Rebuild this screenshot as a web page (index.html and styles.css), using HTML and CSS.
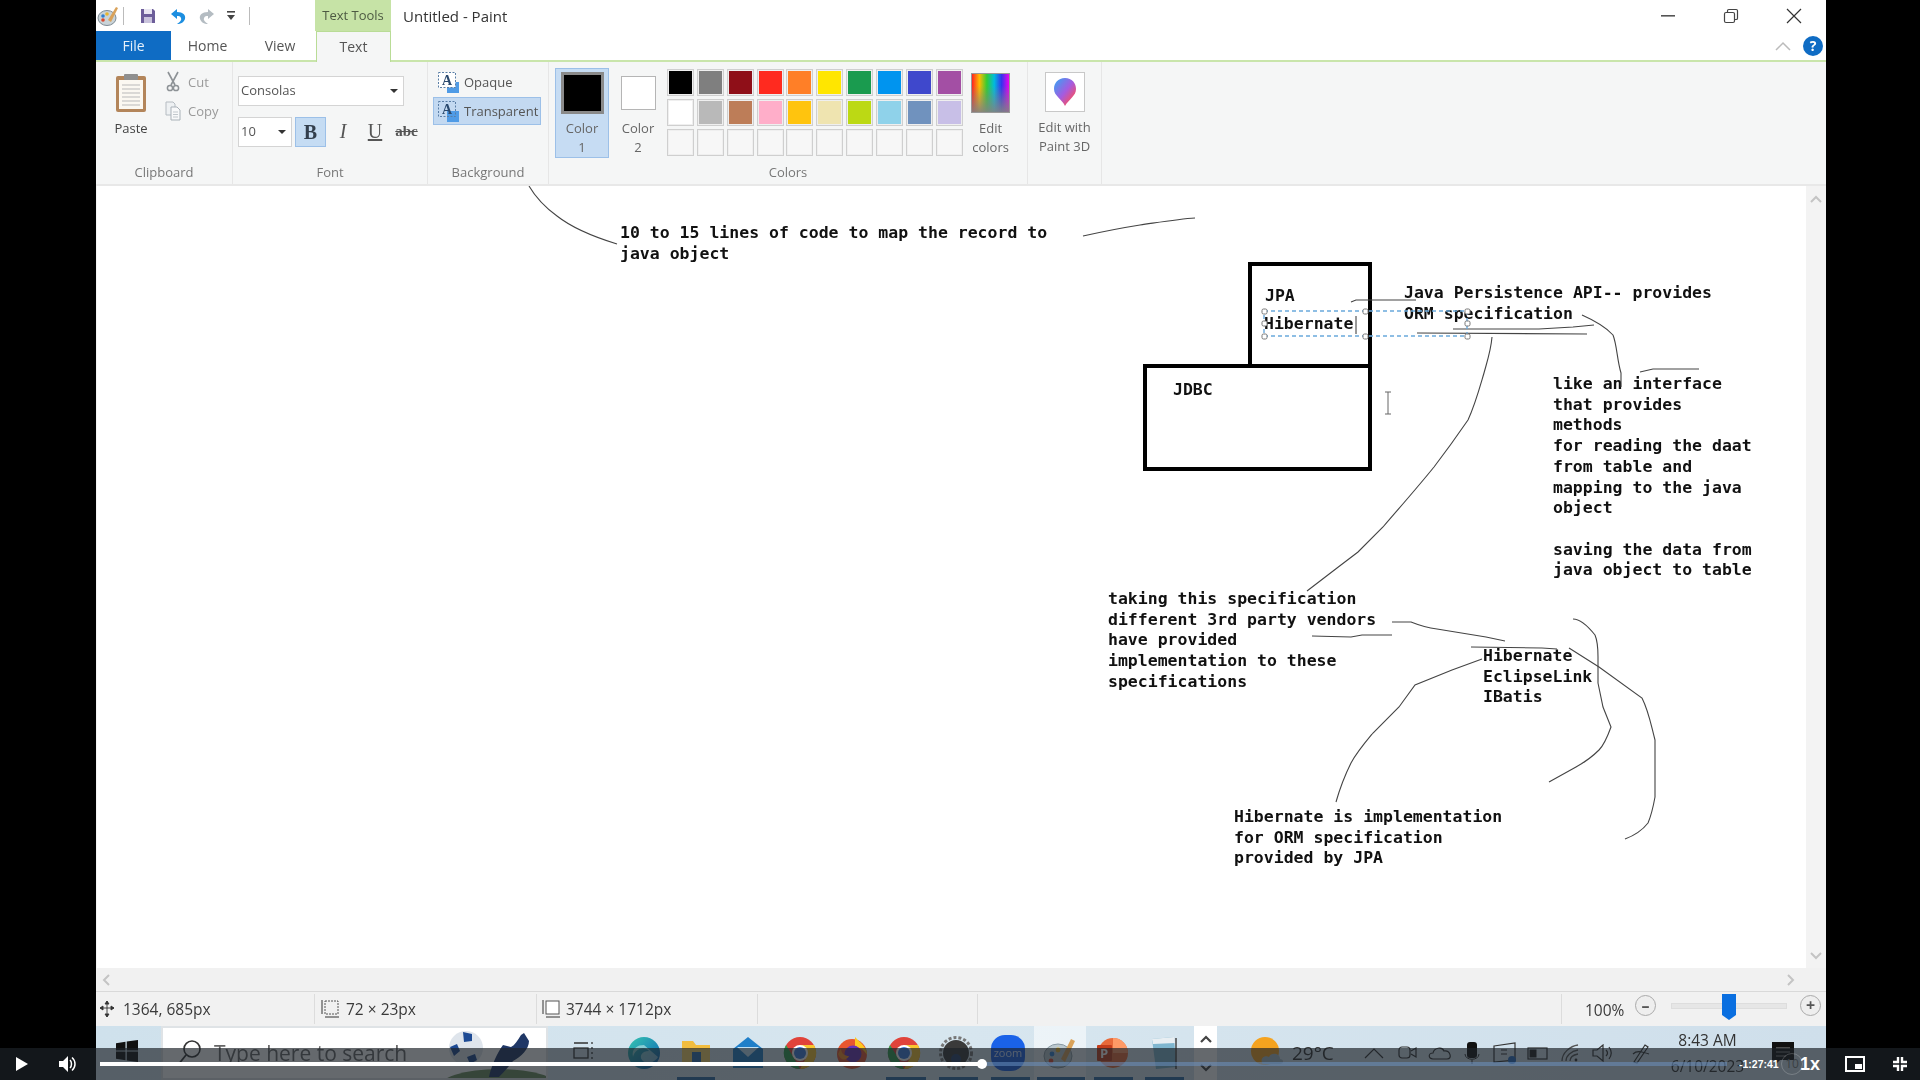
FILE: index.html
```html
<!DOCTYPE html>
<html lang="en">
<head>
  <meta charset="UTF-8" />
  <title>Untitled - Paint</title>
  <link rel="stylesheet" href="styles.css">
</head>
<body>
  <div class="app">

    <div class="titlebar">
      <svg class="qa-paint" width="22" height="22" viewBox="0 0 22 22"><ellipse cx="10" cy="13" rx="9" ry="7.5" fill="#c9d3d8" stroke="#7d8a94"/><circle cx="6" cy="11" r="1.8" fill="#2f7fd1"/><circle cx="10" cy="9" r="1.8" fill="#e8b52c"/><circle cx="6" cy="15" r="1.8" fill="#d9482f"/><path d="M11 15 L19 2 L21 3 L14 17 Z" fill="#d9a25a"/></svg>
      <span class="qa-sep"></span>
      <svg class="qa-save" width="16" height="16" viewBox="0 0 16 16"><path d="M1 1h12l2 2v12H1z" fill="#6d5e9a"/><rect x="4" y="1" width="8" height="5" fill="#e9e6f2"/><rect x="4" y="9" width="8" height="6" fill="#c9c3dc"/></svg>
      <svg class="qa-undo" width="20" height="20" viewBox="0 0 20 20"><path d="M3 8 L9 3 V6 C15 6 18 9 17 13 C16 16 13 18 9 18 C12 16 14 14 13 12 C12 10 11 10 9 10 V13 Z" fill="#1c8ee0"/></svg>
      <svg class="qa-redo" width="20" height="20" viewBox="0 0 20 20"><path d="M17 8 L11 3 V6 C5 6 2 9 3 13 C4 16 7 18 11 18 C8 16 6 14 7 12 C8 10 9 10 11 10 V13 Z" fill="#b4bcc2"/></svg>
      <svg class="qa-more" width="10" height="12" viewBox="0 0 10 12"><rect x="1" y="1" width="8" height="1.6" fill="#444"/><path d="M1 5h8l-4 5z" fill="#444"/></svg>
      <span class="qa-sep qa-sep-2"></span>
      <div class="context-tab">Text Tools</div>
      <div class="window-title">Untitled - Paint</div>
      <div class="window-buttons">
        <svg width="16" height="16" viewBox="0 0 16 16"><rect x="1" y="7" width="14" height="1.6" fill="#555"/></svg>
        <svg width="16" height="16" viewBox="0 0 16 16"><rect x="1.5" y="4.5" width="10" height="10" rx="1.5" fill="#fff" stroke="#444" stroke-width="1.2"/><path d="M4.5 4.5V2.8c0-.8.5-1.3 1.3-1.3h7.4c.8 0 1.3.5 1.3 1.3v7.4c0 .8-.5 1.3-1.3 1.3h-1.7" fill="none" stroke="#444" stroke-width="1.2"/></svg>
        <svg width="16" height="16" viewBox="0 0 16 16"><path d="M1 1 L15 15 M15 1 L1 15" stroke="#333" stroke-width="1.2"/></svg>
      </div>
    </div>

    <div class="tabs">
      <div class="tab tab-file">File</div>
      <div class="tab tab-home">Home</div>
      <div class="tab tab-view">View</div>
      <div class="tab tab-text">Text</div>
      <svg class="collapse" width="16" height="10" viewBox="0 0 16 10"><path d="M1 9 L8 2 L15 9" fill="none" stroke="#bbb" stroke-width="1.5"/></svg>
      <div class="help">?</div>
    </div>

    <div class="ribbon">
      <section class="group group-clipboard">
        <div class="group-body">
          <div class="paste">
            <svg width="32" height="40" viewBox="0 0 32 40"><rect x="1" y="3" width="30" height="36" rx="2" fill="#b3855a"/><rect x="4" y="7" width="24" height="29" fill="#fbf8f1"/><path d="M7 12h18M7 16h18M7 20h18M7 24h18M7 28h18M7 32h18" stroke="#b9b9b9"/><rect x="9" y="1" width="14" height="6" rx="1" fill="#8f8f8f"/></svg>
            <span>Paste</span>
          </div>
          <div class="clip-actions">
            <div class="clip-row">
              <svg width="14" height="21" viewBox="0 0 14 21"><path d="M2 1 L9 14 M12 1 L5 14" stroke="#8d9296" stroke-width="1.6"/><circle cx="4" cy="17" r="2.6" fill="none" stroke="#8d9296" stroke-width="1.5"/><circle cx="10" cy="17" r="2.6" fill="none" stroke="#8d9296" stroke-width="1.5"/></svg>
              <span>Cut</span>
            </div>
            <div class="clip-row">
              <svg width="16" height="20" viewBox="0 0 16 20"><path d="M1 1h7l2 2v11H1z" fill="#eef1f3" stroke="#b5bcc2"/><path d="M6 6h6l3 3v10H6z" fill="#f8f9fa" stroke="#a9b1b8"/><path d="M8 11h5M8 13.5h5M8 16h5" stroke="#c1c7cc"/></svg>
              <span>Copy</span>
            </div>
          </div>
        </div>
        <div class="group-label">Clipboard</div>
      </section>

      <section class="group group-font">
        <div class="group-body font-body">
          <div class="font-select">Consolas<i class="caret"></i></div>
          <div class="font-row">
            <div class="size-select">10<i class="caret"></i></div>
            <div class="fmt fmt-on fmt-b">B</div>
            <div class="fmt fmt-i">I</div>
            <div class="fmt fmt-u">U</div>
            <div class="fmt fmt-s">abc</div>
          </div>
        </div>
        <div class="group-label">Font</div>
      </section>

      <section class="group group-background">
        <div class="group-body bg-body">
          <div class="bg-option">
            <svg width="24" height="23" viewBox="0 0 24 23"><rect x="10" y="11" width="12" height="11" fill="#4f9be6"/><rect x="1.5" y="1.5" width="17" height="15" fill="#fff" stroke="#5a7ea6" stroke-dasharray="2 1.5"/><text x="5" y="14" class="bg-a">A</text></svg>
            <span>Opaque</span>
          </div>
          <div class="bg-option bg-option-on">
            <svg width="24" height="23" viewBox="0 0 24 23"><rect x="10" y="11" width="12" height="11" fill="#4f9be6"/><rect x="1.5" y="1.5" width="17" height="15" fill="none" stroke="#5a7ea6" stroke-dasharray="2 1.5"/><text x="5" y="14" class="bg-a">A</text></svg>
            <span>Transparent</span>
          </div>
        </div>
        <div class="group-label">Background</div>
      </section>

      <section class="group group-colors">
        <div class="group-body colors-body">
          <div class="color-btn color-btn-on">
            <div class="color-1-swatch"></div>
            <span>Color<br>1</span>
          </div>
          <div class="color-btn color-btn-2">
            <div class="color-2-swatch"></div>
            <span>Color<br>2</span>
          </div>
          <div class="palette">
            <i class="c-black"></i><i class="c-grey"></i><i class="c-maroon"></i><i class="c-red"></i><i class="c-orange"></i><i class="c-yellow"></i><i class="c-green"></i><i class="c-azure"></i><i class="c-indigo"></i><i class="c-purple"></i>
            <i class="c-white"></i><i class="c-silver"></i><i class="c-brown"></i><i class="c-pink"></i><i class="c-gold"></i><i class="c-cream"></i><i class="c-lime"></i><i class="c-sky"></i><i class="c-steel"></i><i class="c-lavender"></i>
            <i></i><i></i><i></i><i></i><i></i><i></i><i></i><i></i><i></i><i></i>
          </div>
          <div class="edit-colors">
            <div class="spectrum"></div>
            <span>Edit<br>colors</span>
          </div>
        </div>
        <div class="group-label">Colors</div>
      </section>

      <section class="group group-3d">
        <div class="paint3d">
          <div class="paint3d-icon">
            <svg width="24" height="30" viewBox="0 0 24 30"><defs><linearGradient id="drop" x1="0" y1="0" x2="1" y2="1"><stop offset="0" stop-color="#2fa8f5"/><stop offset=".5" stop-color="#a55be0"/><stop offset=".8" stop-color="#f0506e"/><stop offset="1" stop-color="#ffb02e"/></linearGradient></defs><path d="M12 1 C19 1 23 6 23 12 C23 19 16 22 12 29 C9 22 1 19 1 12 C1 6 5 1 12 1 Z" fill="url(#drop)"/></svg>
          </div>
          <span>Edit with<br>Paint 3D</span>
        </div>
      </section>
    </div>

    <div class="work-area">
      <div class="canvas">
        <p class="note note-code">10 to 15 lines of code to map the record to
java object</p>
        <div class="box box-jpa"></div>
        <div class="box box-jdbc"></div>
        <p class="note note-jpa">JPA</p>
        <p class="note note-hibernate">Hibernate</p>
        <p class="note note-jdbc">JDBC</p>
        <p class="note note-api">Java Persistence API-- provides
ORM specification</p>
        <p class="note note-interface">like an interface
that provides
methods
for reading the daat
from table and
mapping to the java
object

saving the data from
java object to table</p>
        <p class="note note-vendors">taking this specification
different 3rd party vendors
have provided
implementation to these
specifications</p>
        <p class="note note-list">Hibernate
EclipseLink
IBatis</p>
        <p class="note note-impl">Hibernate is implementation
for ORM specification
provided by JPA</p>

        <!-- freehand strokes, coordinates are screen pixels -->
        <svg class="strokes" width="1709" height="782" viewBox="96 186 1709 782">
          <g class="ink">
            <path d="M528 186 C535 198 545 208 556 216 C570 227 590 236 616 244"/>
            <path d="M1082 236 C1100 232 1120 228 1139 225 C1160 222 1178 219 1194 218"/>
            <path d="M1350 302 L1355 300 L1415 300"/>
            <path d="M1452 329 L1538 329 L1572 327 L1593 325"/>
            <path d="M1416 333 L1586 334"/>
            <path d="M1581 315 C1590 319 1604 326 1612 335 C1616 345 1616 360 1620 373 L1620 387"/>
            <path d="M1639 372 L1652 369 L1698 369"/>
            <path d="M1491 337 C1490 350 1486 362 1483 373 C1478 390 1474 405 1467 420 C1456 436 1446 450 1433 467 C1416 488 1400 506 1382 527 L1357 552 L1336 568 L1306 591"/>
            <path d="M1391 622 L1410 622 C1420 626 1428 628 1436 629 L1485 637 L1504 641"/>
            <path d="M1311 636 L1350 637 L1361 635 L1391 635"/>
            <path d="M1470 647 L1541 648 L1556 649"/>
            <path d="M1572 619 C1578 619 1586 625 1594 635 C1597 642 1597 650 1597 657 L1597 683 L1602 707 L1610 727 C1606 738 1603 745 1598 750 C1590 758 1584 762 1575 767 L1548 782"/>
            <path d="M1568 648 L1598 667 L1641 698 C1648 712 1650 725 1654 740 L1654 797 C1652 808 1650 816 1647 823 C1640 832 1632 836 1624 839"/>
            <path d="M1481 659 L1451 670 L1414 685 L1398 707 L1372 733 C1362 745 1356 752 1350 763 C1344 775 1339 788 1335 802"/>
          </g>
          <rect class="select-box" x="1263" y="311" width="203" height="25"/>
          <g class="handles">
            <rect x="1261" y="309" width="5" height="5" rx="1.5"/><rect x="1362" y="309" width="5" height="5" rx="1.5"/><rect x="1464" y="309" width="5" height="5" rx="1.5"/>
            <rect x="1261" y="321" width="5" height="5" rx="1.5"/><rect x="1464" y="321" width="5" height="5" rx="1.5"/>
            <rect x="1261" y="334" width="5" height="5" rx="1.5"/><rect x="1362" y="334" width="5" height="5" rx="1.5"/><rect x="1464" y="334" width="5" height="5" rx="1.5"/>
          </g>
          <path class="text-caret" d="M1355 316 V334"/>
          <path class="ibeam" d="M1384 392 H1390 M1387 392 V414 M1384 414 H1390"/>
        </svg>
      </div>
      <div class="vscroll">
        <svg width="12" height="8" viewBox="0 0 12 8"><path d="M1 7 L6 2 L11 7" fill="none" stroke="#c4c4c4" stroke-width="2"/></svg>
        <svg width="12" height="8" viewBox="0 0 12 8"><path d="M1 1 L6 6 L11 1" fill="none" stroke="#c4c4c4" stroke-width="2"/></svg>
      </div>
    </div>

    <div class="hscroll">
      <svg width="8" height="12" viewBox="0 0 8 12"><path d="M7 1 L2 6 L7 11" fill="none" stroke="#c4c4c4" stroke-width="2"/></svg>
      <svg width="8" height="12" viewBox="0 0 8 12"><path d="M1 1 L6 6 L1 11" fill="none" stroke="#c4c4c4" stroke-width="2"/></svg>
    </div>

    <div class="statusbar">
      <div class="status-cell status-pos">
        <svg width="16" height="18" viewBox="0 0 16 18"><path d="M8 1V17M1 8H15M8 1L6 4H10ZM8 17L6 14H10ZM1 8L4 6V10ZM15 8L12 6V10Z" stroke="#333" fill="#333" stroke-width=".9"/></svg>
        <span>1364, 685px</span>
      </div>
      <div class="status-cell status-sel">
        <svg width="20" height="20" viewBox="0 0 20 20"><rect x="5" y="2" width="13" height="13" fill="none" stroke="#555" stroke-dasharray="2 1"/><path d="M2 1V15M5 18H19" stroke="#333"/></svg>
        <span>72 × 23px</span>
      </div>
      <div class="status-cell status-size">
        <svg width="20" height="20" viewBox="0 0 20 20"><rect x="5" y="2" width="13" height="13" fill="#fff" stroke="#555"/><path d="M2 1V15M5 18H19" stroke="#333"/></svg>
        <span>3744 × 1712px</span>
      </div>
      <div class="status-cell status-gap"></div>
      <div class="status-cell status-empty"></div>
      <div class="zoom-box">
        <span class="zoom-value">100%</span>
        <div class="zoom-btn">–</div>
        <div class="zoom-track"><svg class="zoom-thumb" width="14" height="26" viewBox="0 0 14 26"><path d="M0 0H14V21L7 26L0 21Z" fill="#0a6fe0"/></svg></div>
        <div class="zoom-btn">+</div>
      </div>
    </div>

    <div class="taskbar">
      <div class="start">
        <svg width="22" height="22" viewBox="0 0 22 22"><path d="M0 3.2 L9.5 1.8V10.4H0ZM10.7 1.6L22 0V10.4H10.7ZM0 11.6H9.5V20.2L0 18.8ZM10.7 11.6H22V22L10.7 20.4Z" fill="#111"/></svg>
      </div>
      <div class="search">
        <svg width="26" height="28" viewBox="0 0 26 28"><circle cx="16" cy="10" r="8" fill="none" stroke="#333" stroke-width="1.6"/><path d="M10 16 L2 26" stroke="#333" stroke-width="1.8"/></svg>
        <span>Type here to search</span>
        <svg class="search-art" width="109" height="52" viewBox="0 0 109 52">
          <ellipse cx="60" cy="62" rx="62" ry="20" fill="#6f8f5e"/>
          <circle cx="27" cy="21" r="17" fill="#dfe5ec"/>
          <path d="M24 5 L33 7 L33 14 L25 15 Z M11 20 L18 17 L21 24 L15 29 Z M28 30 L36 27 L38 33 L31 37 Z" fill="#1d4a94"/>
          <path d="M50 50 C52 40 58 26 64 18 L72 20 C76 18 78 14 82 8 L85 6 L90 14 C90 22 82 30 74 34 C68 42 64 46 60 50 Z" fill="#1f3766"/>
        </svg>
      </div>
      <div class="task-slot task-view">
        <svg width="22" height="26" viewBox="0 0 22 26"><rect x="2" y="8" width="14" height="10" fill="none" stroke="#333" stroke-width="1.3"/><path d="M2 3H16M2 23H16M20 2V4M20 7V9M20 12V14M20 17V19" stroke="#333" stroke-width="1.3"/></svg>
      </div>
      <div class="task-slot">
        <svg width="34" height="34" viewBox="0 0 34 34"><defs><linearGradient id="edge" x1="0" y1="0" x2="1" y2="1"><stop offset="0" stop-color="#36c6b0"/><stop offset="1" stop-color="#0c5fb8"/></linearGradient></defs><circle cx="17" cy="17" r="16" fill="url(#edge)"/><path d="M31 21 C27 28 18 28 15 24 C12 20 15 15 22 15 C18 10 8 12 6 21 C4 12 11 9 17 9" fill="#d9f2ee" opacity=".55"/></svg>
      </div>
      <div class="task-slot">
        <svg width="30" height="30" viewBox="0 0 30 30"><path d="M1 3H12L15 7H29V27H1Z" fill="#f2bd3f"/><rect x="1" y="11" width="28" height="16" fill="#f8d468"/><rect x="11" y="14" width="9" height="13" fill="#2d6fb0"/></svg>
      </div>
      <div class="task-slot">
        <svg width="32" height="34" viewBox="0 0 32 34"><path d="M16 1 L31 13 V32 H1 V13 Z" fill="#1f7fc9"/><path d="M5 11 H27 L16 21 Z" fill="#bfe0f5"/></svg>
      </div>
      <div class="task-slot"><svg width="34" height="34" viewBox="0 0 34 34"><use href="#chrome-mark"/></svg></div>
      <div class="task-slot">
        <svg width="34" height="34" viewBox="0 0 34 34"><circle cx="17" cy="18" r="15" fill="#e8562f"/><path d="M20 1 C24 6 32 10 32 19 C28 12 24 12 20 10 Z" fill="#ffc81f"/><circle cx="18" cy="18" r="8.5" fill="#6a34b8"/><path d="M3 18 C6 26 12 24 14 20 C10 20 6 18 6 12 Z" fill="#f88b25"/></svg>
      </div>
      <div class="task-slot">
        <svg width="34" height="34" viewBox="0 0 34 34"><g id="chrome-mark"><circle cx="17" cy="17" r="16" fill="#e0433a"/><path d="M17 33 A16 16 0 0 1 3 9 L11 22 Z" fill="#2f9e4f"/><path d="M17 33 A16 16 0 0 0 31 9 H17 L23 22 Z" fill="#f7c52d"/><circle cx="17" cy="17" r="8" fill="#fff"/><circle cx="17" cy="17" r="6" fill="#3b7ee0"/></g></svg>
      </div>
      <div class="task-slot">
        <svg width="34" height="36" viewBox="0 0 34 36"><circle cx="17" cy="18" r="13" fill="#3a3a3a"/><circle cx="17" cy="18" r="15.5" fill="none" stroke="#777" stroke-width="3" stroke-dasharray="3 2"/><circle cx="17" cy="24" r="5" fill="#27406b"/></svg>
      </div>
      <div class="task-slot">
        <div class="zoom-app">zoom</div>
      </div>
      <div class="task-slot task-active">
        <svg width="34" height="36" viewBox="0 0 34 36"><ellipse cx="15" cy="21" rx="14" ry="12" fill="#bcc9cf" stroke="#8899a3"/><circle cx="9" cy="19" r="2.4" fill="#2f7fd1"/><circle cx="15" cy="15" r="2.4" fill="#e8b52c"/><circle cx="8" cy="26" r="2.4" fill="#d9482f"/><path d="M18 24 L28 4 L32 6 L22 27 Z" fill="#d9a25a"/></svg>
      </div>
      <div class="task-slot">
        <svg width="32" height="34" viewBox="0 0 32 34"><circle cx="17" cy="17" r="15" fill="#e86a3a"/><path d="M17 2 A15 15 0 0 1 32 17 H17 Z" fill="#ff9a66"/><rect x="1" y="9" width="15" height="16" rx="1" fill="#c43e1c"/><text x="4" y="22" class="ppt-p">P</text></svg>
      </div>
      <div class="task-slot">
        <svg width="30" height="36" viewBox="0 0 30 36"><path d="M3 4 L25 2 L27 32 L7 34 Z" fill="#7fb6cf"/><path d="M3 4 L25 2 L26 8 L4 9 Z" fill="#e8eef2"/><path d="M27 3 V34" stroke="#444" stroke-width="1.5"/></svg>
      </div>
      <div class="task-arrows">
        <svg width="12" height="8" viewBox="0 0 12 8"><path d="M1 7 L6 2 L11 7" fill="none" stroke="#444" stroke-width="2.2"/></svg>
        <svg width="12" height="8" viewBox="0 0 12 8"><path d="M1 1 L6 6 L11 1" fill="none" stroke="#444" stroke-width="2.2"/></svg>
      </div>
      <svg class="weather" width="36" height="36" viewBox="0 0 36 36"><circle cx="15" cy="16" r="14" fill="#f5a31f"/><path d="M12 28 C10 22 16 20 19 22 C21 17 30 18 30 24 C34 24 34 29 30 29 H14 C12 29 12 28 12 28 Z" fill="#a9bdcb"/></svg>
      <div class="temp">29°C</div>
      <div class="tray">
        <div class="tray-slot"><svg width="22" height="12" viewBox="0 0 22 12"><path d="M2 11 L11 2 L20 11" fill="none" stroke="#333" stroke-width="1.2"/></svg></div>
        <div class="tray-slot"><svg width="20" height="20" viewBox="0 0 20 20"><rect x="2" y="4" width="11" height="11" rx="3" fill="none" stroke="#333" stroke-width="1.2"/><path d="M14 8 L19 5 V14 L14 11" fill="none" stroke="#333" stroke-width="1.2"/></svg></div>
        <div class="tray-slot"><svg width="24" height="14" viewBox="0 0 24 14"><path d="M5 13 C0 13 0 7 5 7 C6 2 14 0 16 5 C22 4 25 13 19 13 Z" fill="none" stroke="#333" stroke-width="1.2"/></svg></div>
        <div class="tray-slot"><svg width="16" height="24" viewBox="0 0 16 24"><rect x="3" y="1" width="10" height="16" rx="3" fill="#111"/><path d="M1 13 C1 20 15 20 15 13 M8 19V23" fill="none" stroke="#333"/></svg></div>
        <div class="tray-slot"><svg width="24" height="22" viewBox="0 0 24 22"><path d="M1 4 L22 1 V18 L1 20 Z" fill="none" stroke="#333" stroke-width="1.2"/><path d="M8 8H14M8 12H14" stroke="#333"/><circle cx="19" cy="18" r="4" fill="#2a6fc4"/></svg></div>
        <div class="tray-slot"><svg width="22" height="14" viewBox="0 0 22 14"><rect x="1" y="2" width="19" height="11" fill="none" stroke="#333" stroke-width="1.2"/><rect x="2.5" y="3.5" width="7" height="8" fill="#222"/></svg></div>
        <div class="tray-slot"><svg width="20" height="20" viewBox="0 0 20 20"><path d="M2 18 C2 10 10 3 18 2 M6 18 C6 13 11 8 18 7 M10 18 C10 15 13 12 18 11" fill="none" stroke="#555" stroke-width="1.3"/><circle cx="16" cy="17" r="1.4" fill="#333"/></svg></div>
        <div class="tray-slot"><svg width="22" height="18" viewBox="0 0 22 18"><path d="M1 6H5L11 1V17L5 12H1Z" fill="none" stroke="#333" stroke-width="1.2"/><path d="M14 6 C16 8 16 10 14 12 M17 3 C20 7 20 11 17 15" fill="none" stroke="#333" stroke-width="1.2"/></svg></div>
        <div class="tray-slot tray-pen"><svg width="20" height="22" viewBox="0 0 20 22"><path d="M3 20 L14 3 L17 5 L6 21 Z M2 12 C6 8 12 10 18 12" fill="none" stroke="#333" stroke-width="1.2"/></svg></div>
      </div>
      <div class="clock">
        <div>8:43 AM</div>
        <div>6/10/2023</div>
      </div>
      <div class="notify">
        <svg width="22" height="22" viewBox="0 0 22 22"><path d="M0 0H22V18H8L4 22V18H0Z" fill="#111"/><path d="M4 6H18M4 10H18M4 14H14" stroke="#888"/></svg>
      </div>
      <div class="running run-1"></div>
      <div class="running run-2"></div>
      <div class="running run-3"></div>
      <div class="running run-4"></div>
      <div class="running run-5"></div>
      <div class="running run-6"></div>
      <div class="running run-7"></div>
    </div>
  </div>

  <div class="player">
    <svg class="play" width="12" height="14" viewBox="0 0 12 14"><path d="M0 0L12 7L0 14Z" fill="#fff"/></svg>
    <svg class="volume" width="18" height="18" viewBox="0 0 18 18"><path d="M1 6H5L10 1V17L5 12H1Z" fill="#fff"/><path d="M12 5 C14 7 14 11 12 13 M14 2.5 C18 6 18 12 14 15.500" fill="none" stroke="#fff" stroke-width="1.5"/></svg>
    <div class="progress"><div class="progress-fill" style="width: 54.2%"><i class="knob"></i></div></div>
    <span class="time">-1:27:41</span>
    <span class="skip">10</span>
    <span class="speed">1x</span>
    <svg class="pip" width="20" height="16" viewBox="0 0 20 16"><rect x="1" y="1" width="18" height="14" fill="none" stroke="#fff" stroke-width="2"/><rect x="10" y="8" width="7" height="5" fill="#fff"/></svg>
    <svg class="exit-full" width="14" height="14" viewBox="0 0 14 14"><path d="M5 0V5H0M9 0V5H14M5 14V9H0M9 14V9H14" fill="none" stroke="#fff" stroke-width="2.4"/></svg>
  </div>
</body>
</html>
```

FILE: styles.css
```css
* {
  box-sizing: border-box;
}

html, body {
  margin: 0;
  height: 1080px;
  overflow: hidden;
  background: #000;
}

body {
  position: relative;
  font-family: "Open Sans", "Noto Sans", sans-serif;
  color: #444;
}

.app {
  width: 1730px;
  height: 1080px;
  margin-left: 96px;
  display: flex;
  flex-direction: column;
  background: #fff;
  filter: blur(0.4px);
}

/* Title bar */
.titlebar {
  height: 31px;
  flex: none;
  display: flex;
  align-items: center;
  background: #fff;
  position: relative;
}

.qa-paint { margin: 0 0 0 1px; }
.qa-sep { width: 1px; height: 18px; background: #bbb; margin-left: 4px; }
.qa-save { margin-left: 16px; }
.qa-undo { margin-left: 12px; }
.qa-redo { margin-left: 9px; }
.qa-more { margin-left: 9px; }
.qa-sep-2 { margin-left: 13px; }

.context-tab {
  width: 76px;
  height: 31px;
  margin-left: 65px;
  background: #c6e3a6;
  font-size: 13px;
  text-align: center;
  line-height: 30px;
  color: #4d5a42;
}

.window-title {
  margin-left: 12px;
  font-size: 15px;
  color: #333;
}

.window-buttons {
  margin-left: auto;
  width: 142px;
  margin-right: 24px;
  display: flex;
  justify-content: space-between;
  align-items: center;
}

/* Ribbon tabs */
.tabs {
  height: 31px;
  flex: none;
  display: flex;
  align-items: stretch;
  position: relative;
  border-bottom: 2px solid #c9e5ab;
  background: #fff;
  font-size: 14px;
}

.tab {
  text-align: center;
  line-height: 29px;
  color: #555;
}

.tab-file { width: 75px; background: #0f6cc4; color: #e6f0fa; }
.tab-home { width: 73px; }
.tab-view { width: 72px; }

.tab-text {
  width: 75px;
  height: 31px;
  background: #f5f6f6;
  border: 1px solid #b9dc96;
  border-bottom: none;
}

.collapse { position: absolute; right: 35px; top: 10px; }

.help {
  position: absolute;
  right: 3px;
  top: 5px;
  width: 20px;
  height: 20px;
  border-radius: 50%;
  background: #0f6cc4;
  color: #fff;
  font-size: 14px;
  font-weight: 700;
  text-align: center;
  line-height: 20px;
}

/* Ribbon */
.ribbon {
  height: 124px;
  flex: none;
  display: flex;
  background: #f5f6f6;
  font-size: 13px;
  border-bottom: 2px solid #e8e8e8;
}

.group {
  border-right: 1px solid #e6e6e6;
  display: flex;
  flex-direction: column;
  height: 122px;
}

.group-body { flex: 1; display: flex; }

.group-label {
  height: 24px;
  text-align: center;
  line-height: 24px;
  color: #777;
  font-size: 13px;
}

.group-clipboard { width: 137px; }
.group-font { width: 195px; }
.group-background { width: 121px; }
.group-colors { width: 479px; }
.group-3d { width: 74px; }

.paste {
  width: 68px;
  padding: 11px 0 0 2px;
  display: flex;
  flex-direction: column;
  align-items: center;
  gap: 6px;
}

.clip-actions {
  padding-top: 9px;
  margin-left: 1px;
  color: #9a9a9a;
  display: flex;
  flex-direction: column;
  gap: 8px;
}

.clip-row {
  display: flex;
  align-items: center;
  gap: 7px;
  height: 21px;
}

.clip-row svg { width: 16px; }

.font-body {
  flex-direction: column;
  padding: 14px 0 0 5px;
  gap: 11px;
}

.font-select, .size-select {
  background: #fff;
  border: 1px solid #d4d4d4;
  height: 30px;
  line-height: 27px;
  padding-left: 2px;
  position: relative;
  color: #555;
}

.font-select { width: 166px; }
.size-select { width: 54px; margin-right: 3px; }

.caret {
  position: absolute;
  right: 5px;
  top: 12px;
  border: 4px solid transparent;
  border-top-color: #333;
}

.font-row { display: flex; height: 30px; align-items: center; }

.fmt {
  width: 31px;
  height: 30px;
  text-align: center;
  font-family: "Liberation Serif", serif;
  font-size: 20px;
  line-height: 28px;
  color: #555;
}

.fmt-on { background: #c5dcf3; border: 1px solid #9cc0e8; }
.fmt-b { font-weight: 700; color: #333f4d; }
.fmt-i { font-style: italic; width: 32px; margin-left: 1px; }
.fmt-u { text-decoration: underline; width: 32px; }
.fmt-s { text-decoration: line-through; font-size: 15px; width: 31px; font-weight: 700; }

.bg-body {
  flex-direction: column;
  padding: 6px 0 0 5px;
}

.bg-option {
  width: 108px;
  height: 28px;
  display: flex;
  align-items: center;
  padding-left: 3px;
  gap: 3px;
  margin-bottom: 1px;
  border: 1px solid transparent;
  color: #555;
  white-space: nowrap;
}

.bg-option-on { background: #c3d9f1; border-color: #9cc0e8; }
.bg-a { font: 700 14px "Liberation Serif", serif; fill: #2b4a6e; }
.ppt-p { font: 700 13px "Open Sans", sans-serif; fill: #fff; }

.colors-body { padding: 6px 0 0 6px; }

.color-btn {
  height: 90px;
  flex: none;
  text-align: center;
  line-height: 19px;
  color: #666;
  display: flex;
  flex-direction: column;
  align-items: center;
}

.color-btn-on { width: 54px; background: #c6dcf3; border: 1px solid #9cc0e8; padding-top: 3px; }
.color-btn-2 { width: 50px; padding-top: 8px; margin-left: 4px; }

.color-1-swatch {
  width: 43px;
  height: 43px;
  background: #000;
  border: 3px solid #8a8a8a;
  margin-bottom: 5px;
}

.color-2-swatch {
  width: 35px;
  height: 34px;
  background: #fff;
  border: 1px solid #b5b5b5;
  margin-bottom: 9px;
}

.palette {
  display: grid;
  grid-template-columns: repeat(10, 27px);
  grid-auto-rows: 27px;
  gap: 3px 2.85px;
  margin: 1px 0 0 4px;
  height: 87px;
  flex: none;
}

.palette i {
  display: block;
  background: #f7f7f7;
  border: 1px solid #cfcfcf;
  box-shadow: inset 0 0 0 1px #efefef;
}

.palette .c-black { background: #000; }
.palette .c-grey { background: #7f7f7f; }
.palette .c-maroon { background: #8f0f18; }
.palette .c-red { background: #ff2a1f; }
.palette .c-orange { background: #ff7f27; }
.palette .c-yellow { background: #ffe600; }
.palette .c-green { background: #1a9b4f; }
.palette .c-azure { background: #0094ef; }
.palette .c-indigo { background: #3f48cc; }
.palette .c-purple { background: #a34fa4; }
.palette .c-white { background: #fff; }
.palette .c-silver { background: #b9b9b9; }
.palette .c-brown { background: #bd7d58; }
.palette .c-pink { background: #ffaec9; }
.palette .c-gold { background: #ffc40e; }
.palette .c-cream { background: #efe4b0; }
.palette .c-lime { background: #bcd914; }
.palette .c-sky { background: #8fd2ea; }
.palette .c-steel { background: #7092be; }
.palette .c-lavender { background: #c8bfe7; }

.edit-colors {
  width: 46px;
  margin-left: 5px;
  padding-top: 5px;
  text-align: center;
  line-height: 19px;
  color: #666;
  display: flex;
  flex-direction: column;
  align-items: center;
}

.spectrum {
  width: 39px;
  height: 40px;
  margin-bottom: 6px;
  border: 1px solid #999;
  flex: none;
  background:
    linear-gradient(to bottom, transparent 30%, rgba(130,130,130,.9) 100%),
    linear-gradient(to right, #f22, #fb0, #3c3, #0bd, #33e, #e0e);
}

.paint3d {
  padding-top: 10px;
  text-align: center;
  line-height: 19px;
  color: #666;
  display: flex;
  flex-direction: column;
  align-items: center;
}

.paint3d-icon {
  width: 40px;
  height: 40px;
  background: #fff;
  border: 1px solid #c8c8c8;
  margin-bottom: 6px;
  display: flex;
  align-items: center;
  justify-content: center;
}

/* Canvas */
.work-area {
  height: 782px;
  flex: none;
  display: flex;
  background: #f3f3f3;
}

.canvas {
  width: 1709px;
  position: relative;
  background: #fff;
  margin-left: 1px;
  overflow: hidden;
}

.vscroll {
  flex: 1;
  display: flex;
  flex-direction: column;
  justify-content: space-between;
  align-items: center;
  padding: 9px 0 8px;
}

.note {
  position: absolute;
  margin: 0;
  white-space: pre;
  color: #111;
  font: 700 16.5px/20.7px "DejaVu Sans Mono", monospace;
}

.note-code { left: 523px; top: 37px; }
.note-jpa { left: 1168px; top: 100px; }
.note-hibernate { left: 1167px; top: 128px; }
.note-jdbc { left: 1076px; top: 194px; }
.note-api { left: 1307px; top: 97px; }
.note-interface { left: 1456px; top: 188px; }
.note-vendors { left: 1011px; top: 403px; }
.note-list { left: 1386px; top: 460px; }
.note-impl { left: 1137px; top: 621px; }

.box {
  position: absolute;
  border: 4px solid #000;
}

.box-jpa { left: 1151px; top: 76px; width: 124px; height: 106px; }
.box-jdbc { left: 1046px; top: 178px; width: 229px; height: 107px; }

.strokes {
  position: absolute;
  left: 0;
  top: 0;
}

.ink path {
  fill: none;
  stroke: #444;
  stroke-width: 1.1;
}

.select-box {
  fill: none;
  stroke: #6aa9dc;
  stroke-width: 1.4;
  stroke-dasharray: 4 3;
}

.handles rect {
  fill: #fff;
  stroke: #777;
}

.text-caret { stroke: #333; stroke-width: 1; }
.ibeam { stroke: #666; stroke-width: 1; fill: none; }

.hscroll {
  height: 24px;
  flex: none;
  display: flex;
  justify-content: space-between;
  align-items: center;
  padding: 0 31px 0 6px;
  background: #f1f1f1;
  border-bottom: 1px solid #d9d9d9;
}

/* Status bar */
.statusbar {
  height: 34px;
  flex: none;
  display: flex;
  background: #f1f1f1;
  font-size: 15.5px;
  color: #3a3a3a;
  padding-top: 1px;
}

.status-cell {
  display: flex;
  align-items: center;
  margin: 1px 0 2px;
  border-right: 1px solid #dcdcdc;
  padding-left: 3px;
}

.status-pos { width: 219px; gap: 8px; }
.status-sel { width: 222px; gap: 6px; padding-left: 5px; }
.status-size { width: 221px; gap: 5px; padding-left: 4px; }
.status-gap { width: 220px; }
.status-empty { width: 584px; }

.zoom-box {
  flex: 1;
  display: flex;
  align-items: center;
  padding-left: 23px;
}

.zoom-value { width: 50px; }

.zoom-btn {
  width: 21px;
  height: 21px;
  margin-top: -8px;
  border-radius: 50%;
  border: 1px solid #aaa;
  background: #eee;
  text-align: center;
  line-height: 18px;
  font-weight: 700;
  font-size: 16px;
  color: #555;
}

.zoom-track {
  width: 116px;
  height: 6px;
  margin: -8px 13px 0 15px;
  background: #e6e6e6;
  border: 1px solid #ddd;
  position: relative;
}

.zoom-thumb {
  position: absolute;
  left: 50px;
  top: -10px;
}

/* Taskbar */
.taskbar {
  height: 54px;
  flex: none;
  display: flex;
  align-items: center;
  position: relative;
  background: linear-gradient(to right, #cfe1ec, #d7e6ef 50%, #cfdfeb);
}

.start {
  width: 65px;
  padding-left: 20px;
  padding-bottom: 4px;
  display: flex;
}

.search {
  width: 387px;
  height: 54px;
  background: #fff;
  border: 2px solid #dfe3e6;
  display: flex;
  align-items: center;
  padding-left: 13px;
  gap: 12px;
  font-size: 21px;
  color: #666;
  position: relative;
  overflow: hidden;
}

.search-art {
  position: absolute;
  right: -2px;
  top: -1px;
}

.task-slot {
  width: 52px;
  height: 54px;
  display: flex;
  align-items: center;
  justify-content: center;
}

.task-view { width: 70px; }
.task-active { background: rgba(255,255,255,.55); }

.zoom-app {
  width: 34px;
  height: 36px;
  border-radius: 14px;
  background: #1a62e8;
  color: #cfe0ff;
  font-size: 11px;
  text-align: center;
  line-height: 36px;
}

.task-arrows {
  width: 23px;
  height: 54px;
  margin-left: 4px;
  background: #fff;
  display: flex;
  flex-direction: column;
  align-items: center;
  justify-content: space-between;
  padding: 9px 0 8px;
}

.weather { margin-left: 33px; }

.temp {
  margin-left: 6px;
  width: 40px;
  font-size: 19px;
  color: #333;
  white-space: nowrap;
}

.tray {
  margin-left: 26px;
  display: flex;
  align-items: center;
}

.tray-slot {
  width: 32.700px;
  display: flex;
  justify-content: center;
}

.tray-pen { width: 42px; }

.clock {
  width: 78px;
  margin-left: 7px;
  text-align: center;
  font-size: 15.5px;
  line-height: 26px;
  color: #333;
  white-space: nowrap;
}

.notify { margin-left: 25px; display: flex; }

.running {
  position: absolute;
  bottom: 0;
  height: 3px;
  background: #2f6da8;
}

.run-1 { left: 581px; width: 38px; }
.run-2 { left: 790px; width: 40px; }
.run-3 { left: 843px; width: 39px; }
.run-4 { left: 895px; width: 39px; }
.run-5 { left: 941px; width: 48px; }
.run-6 { left: 998px; width: 39px; }
.run-7 { left: 1049px; width: 39px; }

/* Video player overlay */
.player {
  position: absolute;
  left: 0;
  right: 0;
  bottom: 0;
  height: 32px;
  display: flex;
  align-items: center;
  background: rgba(28, 34, 40, .68);
  color: #fff;
}

.play { margin-left: 16px; }
.volume { margin-left: 30px; }

.progress {
  width: 1627px;
  height: 4px;
  margin-left: 24px;
  background: rgba(110, 150, 200, .5);
}

.progress-fill {
  height: 4px;
  background: #fff;
  position: relative;
}

.knob {
  position: absolute;
  right: -5px;
  top: -3px;
  width: 10px;
  height: 10px;
  border-radius: 50%;
  background: #fff;
}

.time {
  margin-left: 12px;
  width: 41px;
  font: 700 10.5px "Liberation Sans", sans-serif;
  white-space: nowrap;
}

.skip {
  width: 22px;
  height: 22px;
  margin-left: 1px;
  border: 1px solid rgba(255,255,255,.2);
  border-radius: 50%;
  text-align: center;
  font-size: 12px;
  line-height: 20px;
  color: #3a3f44;
  flex: none;
}

.speed {
  margin-left: -3px;
  font: 700 18px "Liberation Sans", sans-serif;
}

.pip { margin-left: 25px; }
.exit-full { margin-left: 28px; }
```
